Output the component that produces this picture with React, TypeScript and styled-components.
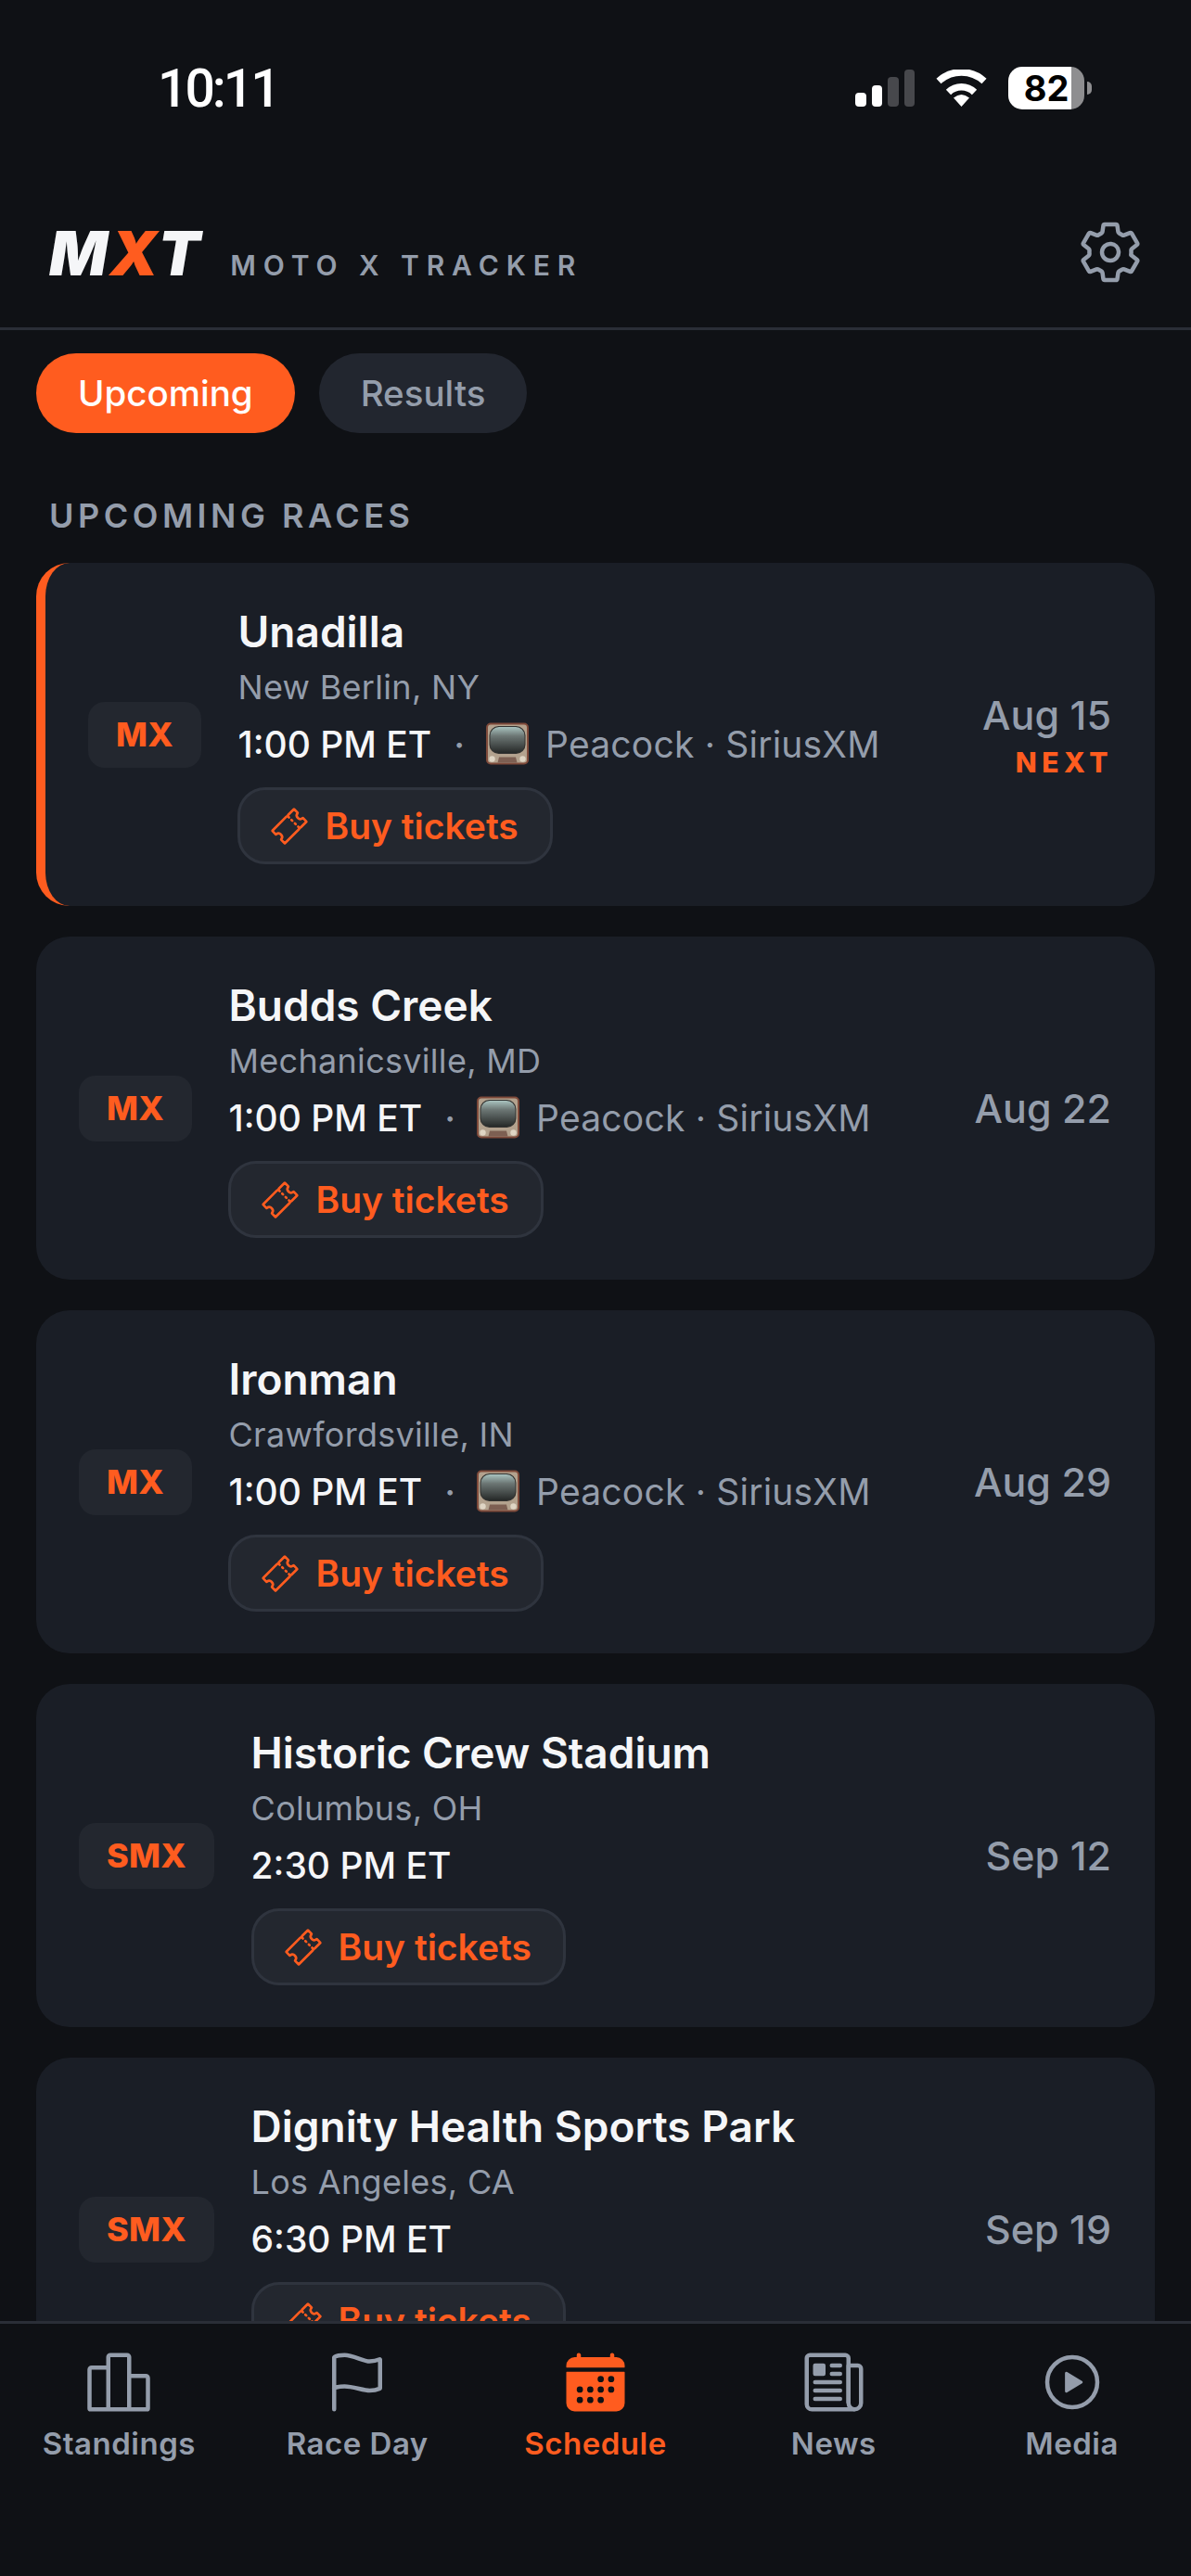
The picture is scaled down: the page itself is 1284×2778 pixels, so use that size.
import React from "react";
import styled, { createGlobalStyle } from "styled-components";
import {
    IoCalendar,
    IoFlagOutline,
    IoNewspaperOutline,
    IoPlayCircleOutline,
    IoPodiumOutline,
    IoSettingsOutline,
    IoTicketOutline,
} from "react-icons/io5";

const ORANGE = "#ff5c1f";
const MUTED = "#949dab";

const GlobalStyle = createGlobalStyle`
    html, body {
        margin: 0;
        padding: 0;
        background: #0f1115;
    }
    * {
        box-sizing: border-box;
    }
`;

const Screen = styled.div`
    width: 1284px;
    height: 2778px;
    display: flex;
    flex-direction: column;
    overflow: hidden;
    background: #0f1115;
    font-family: Inter, "Liberation Sans", sans-serif;
    color: #f5f6f8;
`;

const StatusBar = styled.div`
    height: 190px;
    flex: none;
    display: flex;
    justify-content: space-between;
    align-items: flex-start;
    padding: 65px 107px 0 170px;
`;

const Clock = styled.div`
    font-family: Roboto, Inter, sans-serif;
    font-size: 57px;
    font-weight: 500;
    line-height: 62px;
    letter-spacing: -3px;
    color: #fff;
`;

const StatusIcons = styled.div`
    display: flex;
    align-items: flex-start;
    gap: 23px;
    margin-top: 7px;
`;

const Signal = styled.div`
    display: flex;
    align-items: flex-end;
    gap: 6px;
    height: 40px;
    margin-top: 3px;
`;

const SignalBar = styled.div<{ $h: number; $on: boolean }>`
    width: 11.5px;
    height: ${(p) => p.$h}px;
    border-radius: 4px;
    background: ${(p) => (p.$on ? "#fff" : "#47484c")};
`;

const WifiSlot = styled.div`
    display: flex;
    margin-top: 3px;
`;

const Battery = styled.div`
    display: flex;
    align-items: center;
    gap: 3px;
`;

const BatteryBody = styled.div`
    width: 82px;
    height: 46px;
    border-radius: 15px;
    background: linear-gradient(90deg, #fff 83%, #8e8e90 83%);
    color: #000;
    font-size: 38px;
    font-weight: 700;
    line-height: 46px;
    text-align: center;
`;

const BatteryNub = styled.div`
    width: 5px;
    height: 14px;
    border-radius: 0 7px 7px 0;
    background: #8e8e90;
`;

const Header = styled.header`
    height: 166px;
    flex: none;
    display: flex;
    justify-content: space-between;
    align-items: flex-start;
    padding: 47px 56px 0 53px;
    border-bottom: 3px solid #2a2e37;
`;

const Brand = styled.div`
    display: flex;
    align-items: baseline;
    gap: 30px;
`;

const Logo = styled.div`
    font-size: 66px;
    line-height: 72px;
    font-weight: 900;
    font-style: italic;
    letter-spacing: 2.5px;
    color: #f5f6f8;
`;

const LogoX = styled.span`
    color: ${ORANGE};
`;

const Tagline = styled.div`
    font-size: 30px;
    font-weight: 600;
    letter-spacing: 7.9px;
    color: ${MUTED};
`;

const GearButton = styled.div`
    display: flex;
    margin: -1px -5px 0 0;
    color: ${MUTED};
    font-size: 72px;
`;

const Body = styled.main`
    flex: 1;
    min-height: 0;
    overflow: hidden;
    padding: 25px 39px 0;
`;

const Tabs = styled.div`
    display: flex;
    gap: 26px;
`;

const Tab = styled.div<{ $active?: boolean }>`
    height: 86px;
    padding: 0 45px;
    border-radius: 43px;
    display: flex;
    align-items: center;
    font-size: 38.5px;
    font-weight: 500;
    background: ${(p) => (p.$active ? ORANGE : "#22262f")};
    color: ${(p) => (p.$active ? "#fff" : MUTED)};
`;

const SectionLabel = styled.div`
    margin: 67px 0 29px 14px;
    font-size: 36px;
    line-height: 44px;
    font-weight: 600;
    letter-spacing: 4.5px;
    color: ${MUTED};
`;

const RaceList = styled.div`
    display: flex;
    flex-direction: column;
    gap: 33px;
`;

const Card = styled.article<{ $next?: boolean }>`
    display: flex;
    align-items: center;
    gap: 39.5px;
    height: 370px;
    flex: none;
    padding: 0 47px 0 46px;
    border-radius: 36px;
    background: #1a1e26;
    border-left: ${(p) => (p.$next ? `10px solid ${ORANGE}` : "0 solid transparent")};
`;

const Badge = styled.div`
    flex: none;
    height: 71px;
    padding: 0 30px;
    border-radius: 18px;
    background: #23272f;
    display: flex;
    align-items: center;
    font-size: 36px;
    font-weight: 800;
    letter-spacing: 0.3px;
    color: ${ORANGE};
`;

const RaceInfo = styled.div`
    flex: 1;
    min-width: 0;
    display: flex;
    flex-direction: column;
    align-items: flex-start;
`;

const RaceName = styled.div`
    font-size: 46px;
    line-height: 58px;
    font-weight: 600;
    color: #f5f6f8;
`;

const RaceLocation = styled.div`
    margin-top: 8px;
    font-size: 36px;
    line-height: 46px;
    letter-spacing: 0.3px;
    color: ${MUTED};
`;

const TimeRow = styled.div`
    height: 48px;
    margin-top: 14px;
    display: flex;
    align-items: center;
    font-size: 39px;
    font-weight: 500;
    color: #f5f6f8;
`;

const Dot = styled.span`
    margin: 0 23px 0 24px;
    color: ${MUTED};
`;

const Broadcast = styled.span`
    margin-left: 18px;
    font-weight: 400;
    letter-spacing: 0.2px;
    color: ${MUTED};
`;

const TicketButton = styled.div`
    margin-top: 23px;
    height: 83px;
    padding: 0 34px 0 32px;
    display: flex;
    align-items: center;
    gap: 17px;
    border: 3px solid #2f343e;
    border-radius: 30px;
    background: #23272f;
    font-size: 39px;
    font-weight: 600;
    color: ${ORANGE};
    svg {
        font-size: 42px;
    }
`;

const DateColumn = styled.div`
    flex: none;
    display: flex;
    flex-direction: column;
    align-items: flex-end;
`;

const RaceDate = styled.div`
    font-size: 43px;
    line-height: 50px;
    font-weight: 500;
    color: ${MUTED};
`;

const NextTag = styled.div`
    margin-top: 9px;
    font-size: 30px;
    line-height: 34px;
    font-weight: 800;
    letter-spacing: 5.5px;
    margin-right: -2px;
    color: ${ORANGE};
`;

const BottomNav = styled.nav`
    height: 275px;
    flex: none;
    display: grid;
    grid-template-columns: repeat(5, 1fr);
    padding-top: 27px;
    background: #0f1115;
    border-top: 3px solid #2a2e37;
`;

const NavItem = styled.div<{ $active?: boolean }>`
    display: flex;
    flex-direction: column;
    align-items: center;
    height: fit-content;
    color: ${(p) => (p.$active ? ORANGE : MUTED)};
    font-size: 33px;
    font-weight: 600;
    line-height: 42px;
    letter-spacing: 0.5px;
    svg {
        font-size: 72px;
        margin-bottom: 9px;
    }
`;

const TvIcon = () => (
    <svg width="46" height="46" viewBox="0 0 46 46">
        <defs>
            <linearGradient id="tv-screen" x1="0" y1="0" x2="0" y2="1">
                <stop offset="0" stopColor="#a9c3bf" />
                <stop offset="0.35" stopColor="#6c7674" />
                <stop offset="1" stopColor="#262928" />
            </linearGradient>
        </defs>
        <rect x="0" y="0.5" width="46" height="45" rx="5" fill="#7f4a3a" />
        <rect x="2" y="2.5" width="42" height="41" rx="3" fill="#b3a28e" />
        <rect x="3.5" y="4" width="39" height="30" rx="10" fill="#333331" />
        <rect x="4.5" y="5" width="37" height="28" rx="9.5" fill="url(#tv-screen)" />
        <circle cx="6.5" cy="39.5" r="3.2" fill="#dfd5c4" />
        <circle cx="39.5" cy="39.5" r="3.2" fill="#dfd5c4" />
        <path d="M14 37.5h18l1.5 6h-21z" fill="#7d5f52" />
    </svg>
);

const WifiIcon = () => (
    <svg width="55" height="40" viewBox="0 0 55 40" fill="none" stroke="#fff" strokeWidth="7.5">
        <path d="M3 12.5A36 36 0 0 1 52 12.5" />
        <path d="M13.5 24.5A20 20 0 0 1 41.5 24.5" />
        <path d="M27.5 40L19 30.5Q27.5 23.5 36 30.5Z" fill="#fff" stroke="none" />
    </svg>
);

type Race = {
    series: string;
    name: string;
    location: string;
    time: string;
    date: string;
    tv?: boolean;
    next?: boolean;
};

const races: Race[] = [
    { series: "MX", name: "Unadilla", location: "New Berlin, NY", time: "1:00 PM ET", date: "Aug 15", tv: true, next: true },
    { series: "MX", name: "Budds Creek", location: "Mechanicsville, MD", time: "1:00 PM ET", date: "Aug 22", tv: true },
    { series: "MX", name: "Ironman", location: "Crawfordsville, IN", time: "1:00 PM ET", date: "Aug 29", tv: true },
    { series: "SMX", name: "Historic Crew Stadium", location: "Columbus, OH", time: "2:30 PM ET", date: "Sep 12" },
    { series: "SMX", name: "Dignity Health Sports Park", location: "Los Angeles, CA", time: "6:30 PM ET", date: "Sep 19" },
];

const navItems = [
    { label: "Standings", icon: <IoPodiumOutline /> },
    { label: "Race Day", icon: <IoFlagOutline /> },
    { label: "Schedule", icon: <IoCalendar />, active: true },
    { label: "News", icon: <IoNewspaperOutline /> },
    { label: "Media", icon: <IoPlayCircleOutline /> },
];

const RaceCard = ({ race }: { race: Race }) => (
    <Card $next={race.next}>
        <Badge>{race.series}</Badge>
        <RaceInfo>
            <RaceName>{race.name}</RaceName>
            <RaceLocation>{race.location}</RaceLocation>
            <TimeRow>
                {race.time}
                {race.tv && (
                    <>
                        <Dot>·</Dot>
                        <TvIcon />
                        <Broadcast>Peacock · SiriusXM</Broadcast>
                    </>
                )}
            </TimeRow>
            <TicketButton>
                <IoTicketOutline />
                Buy tickets
            </TicketButton>
        </RaceInfo>
        <DateColumn>
            <RaceDate>{race.date}</RaceDate>
            {race.next && <NextTag>NEXT</NextTag>}
        </DateColumn>
    </Card>
);

export default function App() {
    return (
        <Screen>
            <GlobalStyle />
            <StatusBar>
                <Clock>10:11</Clock>
                <StatusIcons>
                    <Signal>
                        <SignalBar $h={15} $on />
                        <SignalBar $h={23} $on />
                        <SignalBar $h={32} $on={false} />
                        <SignalBar $h={40} $on={false} />
                    </Signal>
                    <WifiSlot>
                        <WifiIcon />
                    </WifiSlot>
                    <Battery>
                        <BatteryBody>82</BatteryBody>
                        <BatteryNub />
                    </Battery>
                </StatusIcons>
            </StatusBar>
            <Header>
                <Brand>
                    <Logo>
                        M<LogoX>X</LogoX>T
                    </Logo>
                    <Tagline>MOTO X TRACKER</Tagline>
                </Brand>
                <GearButton>
                    <IoSettingsOutline />
                </GearButton>
            </Header>
            <Body>
                <Tabs>
                    <Tab $active>Upcoming</Tab>
                    <Tab>Results</Tab>
                </Tabs>
                <SectionLabel>UPCOMING RACES</SectionLabel>
                <RaceList>
                    {races.map((race) => (
                        <RaceCard key={race.name} race={race} />
                    ))}
                </RaceList>
            </Body>
            <BottomNav>
                {navItems.map((item) => (
                    <NavItem key={item.label} $active={item.active}>
                        {item.icon}
                        {item.label}
                    </NavItem>
                ))}
            </BottomNav>
        </Screen>
    );
}
